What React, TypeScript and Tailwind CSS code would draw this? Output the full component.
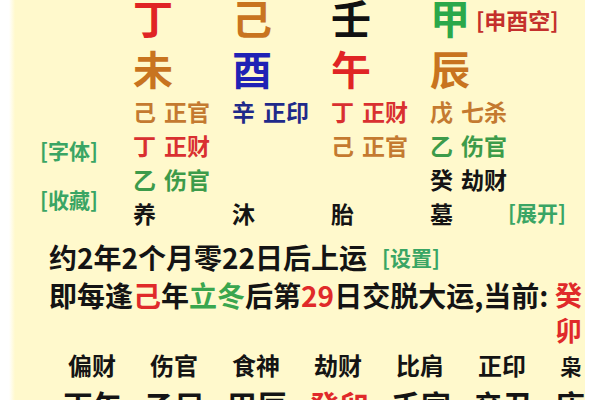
export default function App() {
  return (
    <div className="w-[600px] h-[400px] overflow-hidden bg-white flex font-['Noto_Sans_CJK_SC','Noto_Sans',sans-serif] text-[#141414]">
      <div className="w-[9px] shrink-0 bg-white" />
      <div className="w-[6px] shrink-0 bg-gradient-to-r from-white to-[#fff9cc]" />
      <div className="w-[570px] shrink-0 h-full bg-[#fff9cc] flex flex-col overflow-hidden whitespace-nowrap">
        {/* heavenly stems */}
        <div className="-mt-[9px] h-[52px] shrink-0 flex items-center pl-[118px] text-[40px] leading-[52px] font-bold">
          <div className="w-[99px] text-[#e02424]">丁</div>
          <div className="w-[99px] text-[#c8741f]">己</div>
          <div className="w-[99px] text-[#111111]">壬</div>
          <div className="flex items-center gap-[6px]">
            <span className="text-[#2ba84a]">甲</span>
            <span className="text-[22px] leading-[30px] font-semibold text-[#c4302c] mt-[4px]">[申酉空]</span>
          </div>
        </div>
        {/* earthly branches */}
        <div className="h-[51px] shrink-0 flex items-center pl-[118px] text-[40px] leading-[51px] font-bold">
          <div className="w-[99px] text-[#c8741f]">未</div>
          <div className="w-[99px] text-[#1f22b5]">酉</div>
          <div className="w-[99px] text-[#e02424]">午</div>
          <div className="w-[99px] text-[#c8741f]">辰</div>
        </div>
        {/* hidden stems */}
        <div className="flex shrink-0">
          <div className="w-[118px] shrink-0 flex flex-col pl-[25px] pt-[41px] gap-[19px] text-[21px] leading-[30px] font-semibold text-[#3aa564]">
            <div>[字体]</div>
            <div>[收藏]</div>
          </div>
          <div className="flex flex-col text-[23px] font-bold">
            <div className="h-[34px] leading-[34px] flex">
              <div className="w-[99px] text-[#c47a30]">己<span className="ml-[8px]">正官</span></div>
              <div className="w-[99px] text-[#1f2a8a]">辛<span className="ml-[8px]">正印</span></div>
              <div className="w-[99px] text-[#d93030]">丁<span className="ml-[8px]">正财</span></div>
              <div className="w-[99px] text-[#c47a30]">戊<span className="ml-[8px]">七杀</span></div>
            </div>
            <div className="h-[34px] leading-[34px] flex">
              <div className="w-[99px] text-[#d93030]">丁<span className="ml-[8px]">正财</span></div>
              <div className="w-[99px]" />
              <div className="w-[99px] text-[#c47a30]">己<span className="ml-[8px]">正官</span></div>
              <div className="w-[99px] text-[#3d9b4a]">乙<span className="ml-[8px]">伤官</span></div>
            </div>
            <div className="h-[34px] leading-[34px] flex">
              <div className="w-[99px] text-[#3d9b4a]">乙<span className="ml-[8px]">伤官</span></div>
              <div className="w-[99px]" />
              <div className="w-[99px]" />
              <div className="w-[99px] text-[#141414]">癸<span className="ml-[8px]">劫财</span></div>
            </div>
            <div className="h-[34px] leading-[34px] flex text-[#141414]">
              <div className="w-[99px]">养</div>
              <div className="w-[99px]">沐</div>
              <div className="w-[99px]">胎</div>
              <div className="w-[99px] flex items-center">
                <span>墓</span>
                <span className="ml-[55px] text-[21px] leading-[30px] font-semibold text-[#3aa564] -mt-[3px]">[展开]</span>
              </div>
            </div>
          </div>
        </div>
        {/* luck start */}
        <div className="mt-[8px] h-[38px] shrink-0 flex items-center pl-[34px]">
          <span className="text-[28px] leading-[38px] font-bold">约2年2个月零22日后上运</span>
          <span className="ml-[15px] text-[21px] leading-[30px] font-semibold text-[#3aa564]">[设置]</span>
        </div>
        <div className="grid grid-cols-[506px_28px] pl-[34px] shrink-0">
          <div className="text-[28px] leading-[38px] h-[38px] font-bold">
            即每逢<span className="text-[#e02a2a]">己</span>年<span className="text-[#3aa64e]">立冬</span>后第<span className="text-[#e02a2a]">29</span>日交脱大运,当前:
          </div>
          <div className="flex flex-col text-[27px] font-bold text-[#e02a2a]">
            <div className="h-[38px] leading-[38px]">癸</div>
            <div className="h-[32px] leading-[32px]">卯</div>
          </div>
        </div>
        {/* ten gods */}
        <div className="grid grid-cols-[repeat(7,82px)] pl-[53px] h-[38px] shrink-0 items-center text-[24px] leading-[38px] font-bold">
          <div>偏财</div>
          <div>伤官</div>
          <div>食神</div>
          <div>劫财</div>
          <div>比肩</div>
          <div>正印</div>
          <div className="text-[22px]">枭</div>
        </div>
        {/* luck pillars */}
        <div className="grid grid-cols-[repeat(7,82px)] pl-[48px] h-[40px] shrink-0 text-[30px] leading-[40px] font-bold">
          <div>丙午</div>
          <div>乙巳</div>
          <div>甲辰</div>
          <div className="text-[#e02a2a]">癸卯</div>
          <div>壬寅</div>
          <div>辛丑</div>
          <div>庚子</div>
        </div>
      </div>
    </div>
  );
}
